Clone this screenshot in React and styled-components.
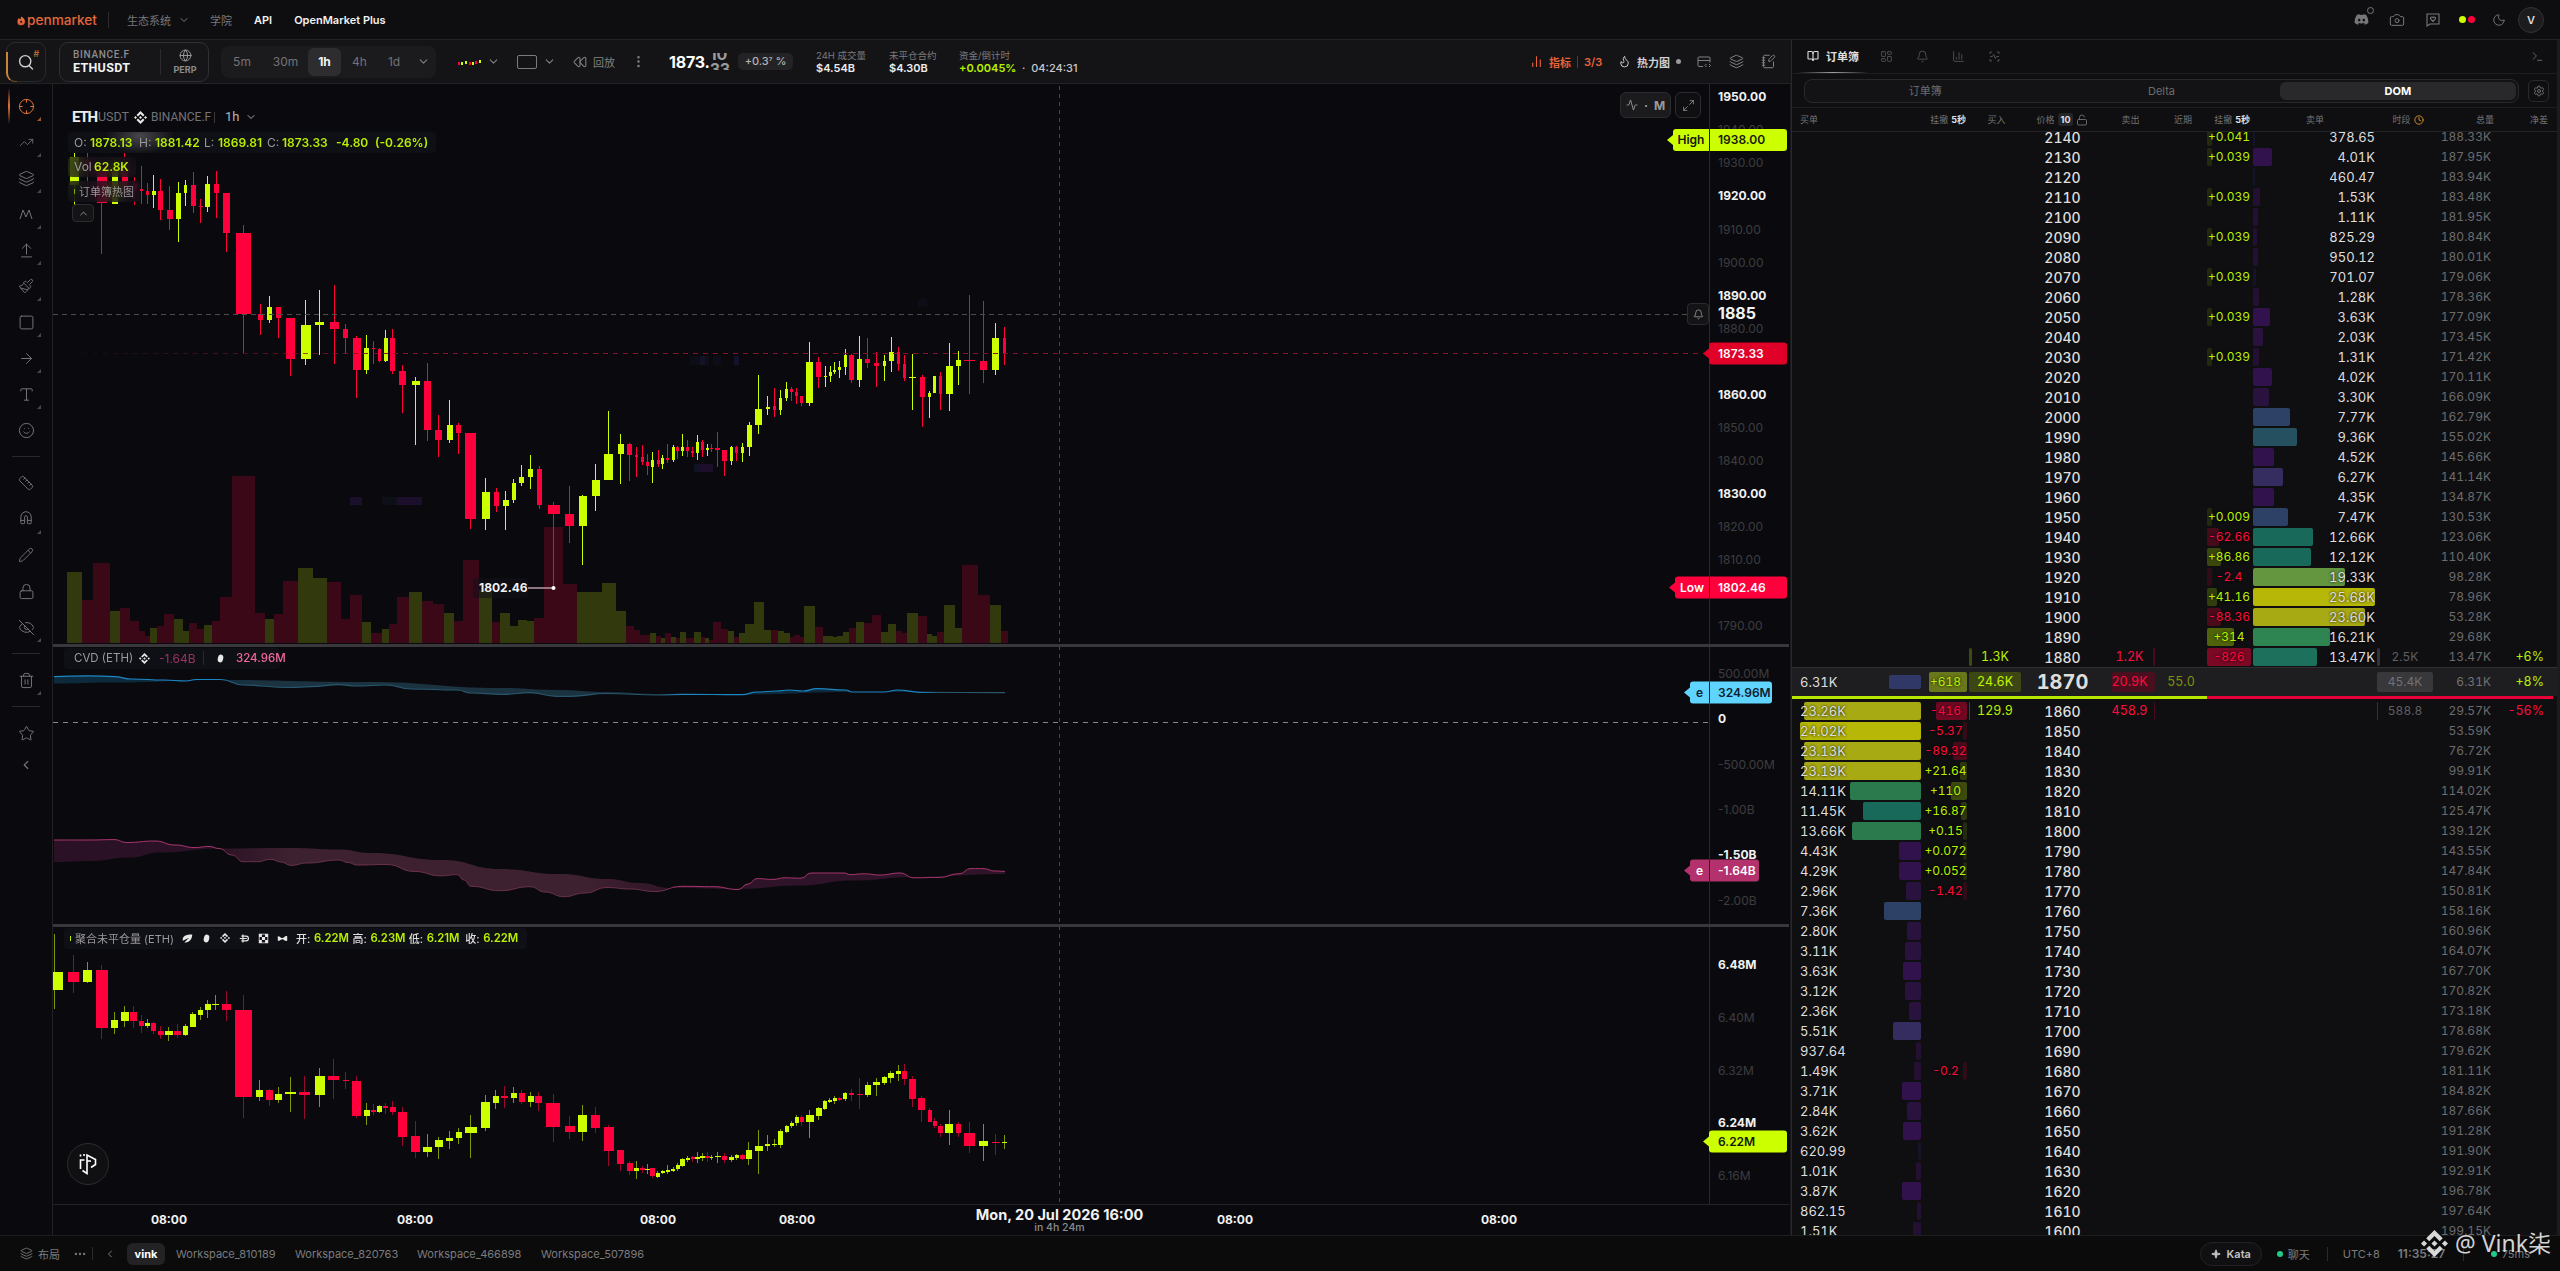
import React from 'react';
import styled, { createGlobalStyle, css } from 'styled-components';
import {
  Activity, ArrowRight, ArrowUpFromLine, Bell, BookOpen, Camera, ChartColumn, ChartNoAxesColumn, ChevronDown,
  ChevronLeft, ChevronUp, Clock, Crosshair, Ellipsis, EllipsisVertical, EyeOff, Flame, Globe, Layers,
  LayoutDashboard, Lock, LockOpen, Magnet, Maximize2, Moon, NotebookPen, Paintbrush, Pencil, Rewind,
  Ruler, Settings, Smile, Sparkle, Square, Star, Terminal, Trash2, TrendingUp, Type,
} from 'lucide-react';
import { FaDiscord } from 'react-icons/fa';
import { SiBinance } from 'react-icons/si';

const lime = '#ccff00';
const red = '#ff003c';
const line = '#222224';
const dim = '#77777a';

const GlobalStyle = createGlobalStyle`
  * { box-sizing: border-box; }
  body {
    margin: 0;
    background: #0a0a0e;
    color: #e6e6e6;
    font-family: Inter, "Noto Sans CJK SC", sans-serif;
    font-size: 12px;
    overflow: hidden;
  }
  svg { display: block; flex: none; }
`;

const Page = styled.div`
  width: 2560px;
  height: 1271px;
  display: grid;
  grid-template-rows: 40px 1195px 36px;
`;

/* ---- top navigation ---- */

const Header = styled.header`
  display: flex;
  align-items: center;
  padding: 0 16px;
  background: #0e0e10;
  border-bottom: 1px solid ${line};
`;
const VLine = styled.i`
  width: 1px;
  height: ${props => props.h || 16}px;
  background: ${props => props.color || '#2b2b2e'};
  margin: 0 ${props => props.gap || 0}px;
  flex: none;
`;
const NavItem = styled.span`
  display: flex;
  align-items: center;
  gap: 7px;
  font-size: 11px;
  font-weight: ${props => (props.strong ? 600 : 400)};
  color: ${props => (props.strong ? '#f2f2f2' : dim)};
  margin-left: ${props => props.ml}px;
  white-space: nowrap;
`;
const HeaderTools = styled.div`
  display: flex;
  align-items: center;
  margin-left: auto;
  color: #77777a;
`;
const HeaderTool = styled.span`
  position: relative;
  display: flex;
  justify-content: center;
  width: ${props => props.w || 35}px;
`;
const Notice = styled.i`
  position: absolute;
  top: -5px;
  right: 5px;
  width: 7px;
  height: 7px;
  border: 1px solid #77777a;
  border-radius: 50%;
`;
const Dot = styled.i`
  width: ${props => props.size || 6}px;
  height: ${props => props.size || 6}px;
  border-radius: 50%;
  background: ${props => props.color};
  flex: none;
`;
const Avatar = styled.span`
  width: 26px;
  height: 26px;
  display: flex;
  align-items: center;
  justify-content: center;
  margin-left: 3px;
  border: 1px solid #333336;
  border-radius: 50%;
  background: #1c1c1e;
  color: #d8d8d8;
  font-size: 11px;
  font-weight: 600;
`;

/* ---- workspace ---- */

const Main = styled.main`
  display: grid;
  grid-template-columns: 1791px 769px;
  min-height: 0;
`;
const Workspace = styled.section`
  display: grid;
  grid-template-rows: 44px 1151px;
`;
const Toolbar = styled.div`
  display: flex;
  align-items: center;
  padding: 0 7px 0 6px;
  background: #141416;
  border-bottom: 1px solid ${line};
  white-space: nowrap;
`;
const SearchButton = styled.div`
  position: relative;
  width: 40px;
  height: 40px;
  display: flex;
  align-items: center;
  justify-content: center;
  border: 1px solid #2a2a2d;
  border-radius: 9px;
  color: #cfcfcf;
  &::before {
    content: '';
    position: absolute;
    left: -1px;
    top: 9px;
    bottom: -1px;
    width: 9px;
    border-left: 2px solid #c9853a;
    border-bottom: 1px solid #7a4c22;
    border-bottom-left-radius: 9px;
  }
`;
const SearchMark = styled.sup`
  position: absolute;
  top: 5px;
  right: 6px;
  color: #b26a35;
  font-size: 9px;
  font-weight: 600;
  font-style: italic;
`;
const SymbolBox = styled.div`
  display: flex;
  align-items: center;
  width: 150px;
  height: 40px;
  margin-left: 13px;
  padding-left: 13px;
  border: 1px solid #303033;
  border-radius: 9px;
  background: #161618;
`;
const Stack = styled.div`
  display: flex;
  flex-direction: column;
  justify-content: center;
  width: ${props => (props.w ? `${props.w}px` : 'auto')};
  margin-left: ${props => props.ml || 0}px;
  align-items: ${props => props.align || 'flex-start'};
  flex: none;
`;
const Venue = styled.span`
  font: 500 10px/12px Roboto, sans-serif;
  letter-spacing: 0.7px;
  color: #8c8c8f;
`;
const Pair = styled.span`
  font: 700 12.5px/13px Roboto, sans-serif;
  letter-spacing: 0.3px;
  color: #f2f2f2;
`;
const Perp = styled.span`
  margin-top: 2px;
  font-size: 9px;
  line-height: 11px;
  font-weight: 700;
  color: #8c8c8f;
`;
const Frames = styled.div`
  display: flex;
  align-items: center;
  height: 32px;
  width: 215px;
  margin-left: 12px;
  border-radius: 8px;
  background: #1b1b1d;
`;
const Frame = styled.span`
  width: ${props => props.w}px;
  height: 28px;
  line-height: 28px;
  text-align: center;
  font-size: 12px;
  border-radius: 6px;
  color: ${props => (props.active ? '#f4f4f4' : '#737376')};
  font-weight: ${props => (props.active ? 700 : 400)};
  background: ${props => (props.active ? '#2d2d30' : 'transparent')};
`;
const ToolSlot = styled.span`
  display: flex;
  align-items: center;
  justify-content: ${props => (props.left ? 'flex-start' : 'center')};
  gap: 6px;
  width: ${props => props.w}px;
  margin-left: ${props => props.ml || 0}px;
  color: ${props => props.color || '#808083'};
  font-size: 11px;
  font-weight: ${props => props.weight || 400};
  flex: none;
`;
const Spacer = styled.i`
  flex: 1;
`;
const Outline = styled.i`
  width: 20px;
  height: 14px;
  border: 1px solid #7b7b7e;
  border-radius: 2px;
`;
const LastPrice = styled.div`
  display: flex;
  align-items: center;
  width: 69px;
  height: 20px;
  margin-left: 24px;
  font-size: 16px;
  font-weight: 700;
  letter-spacing: -0.2px;
  color: #fff;
`;
const RollingDigits = styled.span`
  height: 17px;
  overflow: hidden;
  display: flex;
  flex-direction: column;
  justify-content: center;
  line-height: 15px;
  color: #9b9b9d;
`;
const Badge = styled.div`
  width: 55px;
  height: 17px;
  line-height: 17px;
  border-radius: 5px;
  background: #232326;
  text-align: center;
  font-size: 11px;
  font-weight: 500;
  color: #b4b4b6;
`;
const StatLabel = styled.span`
  font-size: 9.5px;
  line-height: 13px;
  color: #7b7b7e;
`;
const StatValue = styled.span`
  font-size: 11px;
  line-height: 13px;
  font-weight: 600;
  color: ${props => props.color || '#ececec'};
`;
const Countdown = styled.span`
  font-weight: 500;
  color: #c9c9cb;
`;

const ChartRow = styled.div`
  display: grid;
  grid-template-columns: 53px 1738px;
`;
const Rail = styled.nav`
  display: flex;
  flex-direction: column;
  align-items: center;
  padding-top: 4px;
  border-right: 1px solid ${line};
  color: #747477;
`;
const RailButton = styled.div`
  position: relative;
  width: 52px;
  height: ${props => props.h || 36}px;
  display: flex;
  align-items: center;
  justify-content: center;
  color: ${props => (props.active ? '#e07238' : 'inherit')};
  ${props => props.active && css`
    &::before {
      content: '';
      position: absolute;
      left: 8px;
      top: 0;
      width: 2px;
      height: 36px;
      background: linear-gradient(#0a0a0e, #e07238, #0a0a0e);
    }
  `}
  ${props => props.corner && css`
    &::after {
      content: '';
      position: absolute;
      right: 11px;
      bottom: 3px;
      border-left: 4px solid transparent;
      border-bottom: 4px solid ${props.active ? '#a5562d' : '#4a4a4d'};
    }
  `}
`;
const RailRule = styled.hr`
  width: 28px;
  height: 1px;
  margin: 8px 0;
  border: 0;
  background: #29292c;
`;

const ChartArea = styled.div`
  position: relative;
  border-right: 1px solid #1a1a1c;
`;
const AxisText = styled.text`
  font-size: ${props => props.$size || 12}px;
  font-weight: ${props => props.$weight || (props.$bold ? 700 : 400)};
  fill: ${props => props.$fill || (props.$bold ? '#f2f2f2' : '#3d3d40')};
  text-anchor: ${props => props.$anchor || 'start'};
`;
const Legend = styled.div`
  position: absolute;
  left: ${props => props.x}px;
  top: ${props => props.y}px;
  width: ${props => props.w}px;
  height: ${props => props.h || 21}px;
  display: flex;
  align-items: center;
  padding: 0 0 1px 6px;
  border-radius: 4px;
  background-color: rgba(18, 18, 26, 0.72);
  ${props => props.glow && css`
    background-image: radial-gradient(ellipse 34px 18px at 72px 4px, #48484a, transparent);
  `}
  backdrop-filter: blur(6px);
  color: #9a9a9c;
  white-space: nowrap;
`;
const LegendPart = styled.span`
  display: flex;
  align-items: center;
  width: ${props => props.w}px;
  padding-left: ${props => props.pl || 0}px;
  color: ${props => props.color || 'inherit'};
  font-weight: ${props => props.weight || 400};
  font-size: ${props => props.size || 12}px;
  flex: none;
`;
const Tick = styled.i`
  width: 1px;
  height: 5px;
  margin-right: 4px;
  background: ${props => props.color};
`;
const ChartTitle = styled.div`
  position: absolute;
  left: 19px;
  top: 22px;
  display: flex;
  align-items: center;
  height: 22px;
  color: #737376;
  font: 400 13px/22px Roboto, sans-serif;
`;
const Base = styled.b`
  width: 26px;
  color: #ededed;
  font-size: 15px;
  letter-spacing: -1.2px;
`;
const FloatButton = styled.div`
  position: absolute;
  left: ${props => props.x}px;
  top: ${props => props.y}px;
  width: ${props => props.w}px;
  height: ${props => props.h}px;
  display: flex;
  align-items: center;
  justify-content: center;
  gap: 6px;
  border: 1px solid #2c2c2f;
  border-radius: ${props => props.r || 6}px;
  background: ${props => props.bg || '#141416'};
  color: #9a9a9c;
  font-weight: 700;
`;

/* ---- order book panel ---- */

const Panel = styled.aside`
  display: grid;
  grid-template-rows: 34px 34px 24px 1103px;
  border-left: 1px solid #29292b;
  border-right: 3px solid #1c1c1e;
  background: #0f0f11;
  overflow: hidden;
`;
const Tabs = styled.div`
  display: flex;
  align-items: center;
  padding: 0 13px 0 6px;
  border-bottom: 1px solid #1d1d1f;
  color: #4e4e51;
`;
const Tab = styled.span`
  display: flex;
  align-items: center;
  justify-content: center;
  gap: 7px;
  width: ${props => (props.active ? 70 : 36)}px;
  height: 33px;
  font-size: 11px;
  font-weight: 600;
  color: ${props => (props.active ? '#e0e0e0' : 'inherit')};
  ${props => props.active && css`
    border-bottom: 1px solid;
    border-image: linear-gradient(90deg, transparent, #a0a0a0, transparent) 1;
  `}
`;
const Prompt = styled.span`
  margin-left: auto;
  color: #747477;
`;
const ModeRow = styled.div`
  display: flex;
  align-items: center;
  gap: 9px;
  padding: 0 8px 0 12px;
  border-bottom: 1px solid #1d1d1f;
`;
const Modes = styled.div`
  display: grid;
  grid-template-columns: repeat(3, 1fr);
  flex: 1;
  height: 24px;
  padding: 2px;
  border: 1px solid #29292b;
  border-radius: 8px;
  background: #131315;
`;
const Mode = styled.span`
  line-height: 18px;
  text-align: center;
  font-size: 11px;
  border-radius: 6px;
  color: ${props => (props.active ? '#fff' : '#6c6c6f')};
  font-weight: ${props => (props.active ? 700 : 400)};
  background: ${props => (props.active ? '#29292b' : 'transparent')};
`;
const GearButton = styled.span`
  display: flex;
  align-items: center;
  justify-content: center;
  width: 21px;
  height: 22px;
  border: 1px solid #29292b;
  border-radius: 5px;
  color: #77777a;
`;
const columns = '121px 48px 52px 83px 51px 52px 46px 124px 56px 58px 53px';
const HeadRow = styled.div`
  display: grid;
  grid-template-columns: ${columns};
  align-items: center;
  padding-left: 8px;
  border-bottom: 1px solid #232325;
  font-size: 9px;
  color: #737376;
  white-space: nowrap;
`;
const Head = styled.span`
  display: flex;
  align-items: center;
  justify-content: ${props => props.align || 'center'};
  gap: 3px;
  margin-right: ${props => props.mr || 0}px;
  b { color: #e0e0e0; }
`;
const Step = styled.b`
  padding: 0 3px;
  border-radius: 3px;
  background: #252528;
  line-height: 13px;
`;
const Rows = styled.div`
  overflow: hidden;
`;
const AskRows = styled.div`
  margin-top: -5px;
`;
const Row = styled.div`
  display: grid;
  grid-template-columns: ${columns};
  height: ${props => (props.current ? 29 : 20)}px;
  padding-left: 8px;
  background: ${props => (props.current ? '#1e1e20' : 'transparent')};
  border-top: ${props => (props.current ? '1px solid #303033' : '0')};
  font-size: 12.5px;
  font-variant-numeric: tabular-nums;
`;
const Cell = styled.div`
  display: flex;
  align-items: center;
  position: relative;
  min-width: 0;
  margin: 1px ${props => props.mr || 0}px 1px ${props => props.ml || 0}px;
  padding-bottom: 1px;
  justify-content: ${props => props.align || 'center'};
  color: ${props => props.color || '#dededf'};
  font-size: ${props => (props.size ? `${props.size}px` : 'inherit')};
  text-shadow: ${props => (props.shadow ? '0 0 3px #000' : 'none')};
`;
const Price = styled.div`
  display: flex;
  align-items: center;
  justify-content: center;
  font-size: ${props => (props.current ? 20 : 14)}px;
  font-weight: ${props => (props.current ? 700 : 500)};
  color: #dededf;
`;
const Bar = styled.i`
  position: absolute;
  top: ${props => props.inset || 0}px;
  bottom: ${props => props.inset || 0}px;
  ${props => (props.right ? 'right: 0;' : 'left: 0;')}
  border-radius: 2px;
`;
const CellText = styled.span`
  position: relative;
`;
const Imbalance = styled.div`
  height: 3px;
  margin-bottom: 2px;
  margin-right: 4px;
  display: grid;
  grid-template-columns: 415px 1fr;
`;
const ImbalanceSide = styled.i`
  background: ${props => props.color};
`;

/* ---- footer ---- */

const Footer = styled.footer`
  position: relative;
  display: flex;
  align-items: center;
  padding: 0 30px 0 20px;
  border-top: 1px solid #1d1d1f;
  background: #0b0b0c;
  color: #7b7b7e;
  white-space: nowrap;
`;
const FootItem = styled.span`
  display: flex;
  align-items: center;
  gap: 5px;
  width: ${props => (props.w ? `${props.w}px` : 'auto')};
  padding-left: ${props => props.pl || 0}px;
  margin-left: ${props => props.ml || 0}px;
  font-size: ${props => props.size || 11}px;
  font-weight: ${props => props.weight || 400};
  flex: none;
`;
const ActiveSpace = styled.span`
  width: 38px;
  height: 22px;
  margin-right: 11px;
  line-height: 22px;
  text-align: center;
  border-radius: 6px;
  background: #232325;
  color: #fff;
  font-size: 11px;
  font-weight: 700;
`;
const Kata = styled.span`
  display: flex;
  align-items: center;
  justify-content: center;
  gap: 6px;
  width: 62px;
  height: 24px;
  margin-left: auto;
  border: 1px solid #232326;
  border-radius: 12px;
  background: #101012;
  color: #c4c4c6;
  font-size: 11px;
  font-weight: 600;
`;
const Signature = styled.div`
  position: absolute;
  right: 9px;
  top: -9px;
  display: flex;
  align-items: center;
  gap: 7px;
  color: rgba(232, 232, 232, 0.92);
  font: 400 23px/32px "Noto Sans", "Noto Sans CJK SC", sans-serif;
`;

// [center x, body width, body top, body bottom, wick top, wick bottom, rising]
const priceCandles = [
  [74.5, 9, 157, 185, 153, 206, 1], [87.5, 5, 160, 168, 153, 192, 0], [101.5, 10, 167, 203, 160, 254, 0],
  [114.5, 6, 166, 204, 160, 204, 1], [124.5, 6, 166, 190, 153, 196, 0], [134.5, 4, 184, 190, 177, 205, 0],
  [141.5, 3, 189, 191, 166, 204, 0], [147.5, 3, 191, 195, 183, 204, 0], [153.5, 4, 191, 195, 175, 208, 1],
  [160.5, 5, 191, 210, 179, 220, 0], [169.5, 6, 210, 219, 186, 230, 0], [178.5, 5, 193, 219, 182, 242, 1],
  [185.5, 3, 185, 193, 180, 206, 1], [193.5, 5, 185, 206, 172, 213, 0], [200.5, 4, 206, 207, 199, 223, 0],
  [207.5, 5, 184, 207, 176, 212, 1], [216.5, 5, 184, 193, 171, 218, 0], [226.5, 7, 193, 233, 193, 252, 0],
  [243.5, 15, 233, 314, 225, 353, 0], [260.5, 5, 314, 320, 304, 335, 0], [269.5, 5, 307, 320, 296, 323, 1],
  [278.5, 5, 307, 318, 307, 338, 0], [290.5, 9, 318, 359, 318, 376, 0], [305.5, 10, 325, 359, 300, 365, 1],
  [319.5, 9, 322, 325, 290, 355, 1], [334.5, 9, 322, 329, 285, 364, 0], [345.5, 5, 329, 338, 324, 353, 0],
  [356.5, 8, 338, 370, 336, 398, 0], [366.5, 5, 348, 370, 335, 374, 1], [373.5, 3, 348, 349, 341, 364, 0],
  [379.5, 3, 349, 361, 348, 362, 0], [385.5, 4, 338, 361, 330, 362, 1], [392.5, 5, 338, 371, 329, 374, 0],
  [402.5, 7, 371, 385, 365, 413, 0], [415.5, 8, 381, 385, 377, 445, 1], [427.5, 7, 381, 430, 363, 441, 0],
  [438.5, 7, 430, 440, 415, 457, 0], [449.5, 6, 425, 440, 400, 443, 1], [458.5, 5, 425, 433, 423, 454, 0],
  [470.5, 11, 433, 519, 433, 529, 0], [485.5, 8, 492, 519, 478, 530, 1], [496.5, 5, 492, 506, 488, 512, 0],
  [505.5, 6, 500, 506, 491, 530, 1], [513.5, 4, 483, 500, 479, 503, 1], [521.5, 5, 477, 483, 465, 486, 1],
  [530.5, 5, 469, 477, 455, 489, 1], [539.5, 5, 469, 505, 466, 509, 0], [553.5, 12, 505, 514, 502, 588, 0],
  [569.5, 9, 514, 526, 486, 543, 0], [582.5, 8, 496, 526, 495, 565, 1], [595.5, 8, 480, 496, 464, 511, 1],
  [608.5, 9, 454, 480, 411, 480, 1], [620.5, 6, 444, 454, 434, 484, 1], [629.5, 5, 444, 455, 443, 481, 0],
  [636.5, 3, 455, 457, 447, 477, 0], [642.5, 3, 457, 462, 445, 465, 0], [647.5, 3, 462, 466, 454, 475, 0],
  [652.5, 3, 460, 467, 452, 483, 1], [658.5, 3, 460, 464, 450, 467, 0], [662.5, 3, 458, 464, 455, 469, 1],
  [667.5, 3, 458, 460, 444, 463, 0], [673.5, 3, 447, 460, 445, 462, 1], [677.5, 3, 447, 451, 446, 459, 0],
  [682.5, 3, 447, 451, 434, 456, 1], [687.5, 3, 447, 451, 440, 457, 0], [692.5, 3, 451, 453, 447, 457, 0],
  [697.5, 3, 442, 453, 435, 460, 1], [702.5, 3, 442, 450, 440, 457, 0], [707.5, 3, 448, 450, 444, 456, 1],
  [711.5, 3, 448, 449, 444, 452, 0], [717.5, 5, 448, 450, 432, 467, 0], [724.5, 5, 450, 461, 450, 476, 0],
  [731.5, 3, 447, 461, 446, 465, 1], [736.5, 3, 447, 453, 446, 461, 0], [742.5, 3, 447, 453, 443, 462, 1],
  [749.5, 5, 425, 447, 422, 456, 1], [758.5, 7, 409, 425, 375, 434, 1], [767.5, 4, 407, 409, 396, 415, 1],
  [774.5, 3, 406, 410, 388, 417, 0], [780.5, 3, 398, 410, 390, 415, 1], [786.5, 3, 389, 398, 382, 401, 1],
  [791.5, 3, 389, 392, 387, 401, 0], [796.5, 3, 392, 396, 388, 404, 0], [801.5, 3, 396, 403, 396, 406, 0],
  [809.5, 7, 362, 403, 342, 406, 1], [818.5, 5, 362, 377, 357, 388, 0], [825.5, 3, 376, 377, 366, 387, 1],
  [830.5, 3, 372, 376, 366, 382, 1], [834.5, 3, 370, 372, 362, 374, 1], [839.5, 3, 367, 370, 361, 378, 1],
  [845.5, 3, 355, 367, 349, 375, 1], [851.5, 5, 355, 380, 354, 383, 0], [859.5, 5, 359, 380, 336, 387, 1],
  [867.5, 5, 359, 363, 338, 368, 0], [876.5, 5, 363, 366, 352, 387, 0], [884.5, 3, 361, 366, 355, 381, 1],
  [891.5, 5, 352, 361, 337, 372, 1], [898.5, 3, 352, 364, 347, 371, 0], [904.5, 3, 364, 378, 355, 381, 0],
  [912.5, 7, 377, 378, 354, 410, 1], [922.5, 5, 377, 397, 375, 427, 0], [929.5, 3, 393, 397, 391, 418, 1],
  [934.5, 3, 376, 393, 376, 393, 1], [940.5, 3, 376, 394, 372, 410, 0], [949.5, 7, 366, 394, 343, 411, 1],
  [958.5, 5, 360, 366, 351, 385, 1], [969.5, 11, 360, 361, 295, 394, 0], [983.5, 7, 361, 370, 301, 383, 0],
  [995.5, 7, 338, 370, 323, 375, 1], [1004.5, 3, 338, 354, 327, 365, 0],
];

const interestCandles = [
  [54.5, 17, 972, 990, 934, 1009, 1], [73.5, 11, 972, 982, 955, 993, 0], [87.5, 9, 970, 982, 962, 983, 1],
  [101.5, 12, 970, 1028, 965, 1039, 0], [114.5, 7, 1020, 1028, 1012, 1034, 1], [124.5, 8, 1012, 1021, 1006, 1027, 1],
  [133.5, 7, 1012, 1021, 1006, 1028, 0], [141.5, 5, 1021, 1026, 1015, 1033, 0], [147.5, 5, 1023, 1026, 1019, 1028, 1],
  [153, 5, 1023, 1031, 1022, 1034, 0], [160.5, 6, 1031, 1035, 1026, 1039, 0], [168.5, 8, 1031, 1035, 1027, 1041, 1],
  [177.5, 7, 1031, 1035, 1024, 1038, 0], [185.5, 5, 1026, 1035, 1024, 1036, 1], [192.5, 6, 1014, 1027, 1012, 1027, 1],
  [200.5, 5, 1010, 1015, 1007, 1020, 1], [207.5, 6, 1004, 1010, 1000, 1018, 1], [215.5, 7, 1004, 1005, 995, 1010, 1],
  [226, 9, 1004, 1010, 991, 1021, 0], [243.5, 17, 1010, 1097, 995, 1118, 0], [259.5, 7, 1090, 1097, 1080, 1101, 1],
  [269.5, 7, 1090, 1100, 1089, 1106, 0], [278.5, 7, 1094, 1100, 1087, 1103, 1], [290.5, 11, 1092, 1094, 1077, 1112, 1],
  [304.5, 11, 1092, 1095, 1076, 1119, 0], [319.5, 10, 1076, 1095, 1068, 1107, 1], [333.5, 11, 1076, 1080, 1059, 1099, 0],
  [345.5, 6, 1080, 1081, 1072, 1089, 0], [356, 9, 1081, 1116, 1076, 1118, 0], [366.5, 6, 1110, 1116, 1103, 1125, 1],
  [373.5, 5, 1110, 1112, 1104, 1115, 0], [379.5, 5, 1106, 1112, 1105, 1113, 1], [385.5, 5, 1106, 1108, 1103, 1114, 0],
  [392.5, 6, 1107, 1112, 1101, 1115, 0], [402.5, 9, 1112, 1137, 1107, 1146, 0], [415, 9, 1136, 1152, 1121, 1158, 0],
  [427.5, 9, 1147, 1152, 1134, 1157, 1], [438.5, 8, 1140, 1147, 1137, 1159, 1], [449.5, 7, 1138, 1141, 1131, 1149, 1],
  [458.5, 6, 1132, 1138, 1128, 1144, 1], [470.5, 12, 1127, 1133, 1115, 1158, 1], [485, 9, 1102, 1128, 1095, 1131, 1],
  [495.5, 6, 1096, 1103, 1090, 1109, 1], [504.5, 7, 1096, 1098, 1086, 1108, 0], [513.5, 6, 1093, 1098, 1087, 1103, 1],
  [521.5, 6, 1093, 1102, 1090, 1104, 0], [530.5, 6, 1096, 1102, 1092, 1107, 1], [538.5, 7, 1096, 1103, 1092, 1111, 0],
  [553, 14, 1103, 1127, 1094, 1142, 0], [569.5, 10, 1126, 1132, 1116, 1139, 0], [582.5, 9, 1115, 1132, 1105, 1141, 1],
  [595, 9, 1115, 1128, 1107, 1133, 0], [608.5, 10, 1127, 1151, 1125, 1166, 0], [620.5, 7, 1150, 1164, 1150, 1171, 0],
  [629.5, 6, 1163, 1171, 1161, 1175, 0], [636.5, 5, 1168, 1171, 1161, 1179, 1], [642.5, 5, 1168, 1170, 1166, 1173, 0],
  [647.5, 5, 1169, 1170, 1164, 1174, 1], [652.5, 5, 1168, 1176, 1168, 1178, 0], [657.5, 4, 1173, 1177, 1171, 1178, 1],
  [662.5, 4, 1171, 1173, 1170, 1174, 1], [667.5, 4, 1170, 1172, 1165, 1174, 1], [673, 4, 1169, 1171, 1167, 1172, 1],
  [677.5, 4, 1165, 1169, 1163, 1171, 1], [682.5, 5, 1159, 1166, 1158, 1167, 1], [687.5, 4, 1158, 1160, 1156, 1162, 1],
  [692.5, 4, 1157, 1159, 1156, 1162, 0], [697.5, 5, 1157, 1159, 1152, 1163, 1], [702.5, 5, 1156, 1158, 1153, 1161, 1],
  [707.5, 5, 1156, 1158, 1152, 1162, 0], [711.5, 3, 1157, 1158, 1155, 1160, 1], [717.5, 6, 1156, 1157, 1152, 1163, 1],
  [724.5, 5, 1156, 1160, 1153, 1163, 0], [731.5, 5, 1157, 1160, 1155, 1162, 1], [736.5, 4, 1155, 1158, 1154, 1160, 1],
  [742, 5, 1155, 1159, 1154, 1160, 0], [748.5, 6, 1150, 1159, 1142, 1165, 1], [758.5, 8, 1146, 1151, 1130, 1174, 1],
  [767.5, 5, 1144, 1146, 1135, 1151, 1], [774.5, 5, 1144, 1145, 1139, 1147, 1], [780.5, 5, 1131, 1145, 1129, 1148, 1],
  [786.5, 4, 1126, 1132, 1125, 1133, 1], [791.5, 4, 1123, 1126, 1121, 1128, 1], [796.5, 4, 1117, 1123, 1115, 1126, 1],
  [801.5, 4, 1117, 1122, 1115, 1126, 0], [809.5, 8, 1115, 1122, 1110, 1138, 1], [818.5, 6, 1108, 1116, 1107, 1120, 1],
  [824.5, 4, 1101, 1109, 1100, 1110, 1], [829.5, 4, 1100, 1102, 1098, 1103, 1], [834.5, 4, 1098, 1101, 1096, 1104, 1],
  [839.5, 4, 1098, 1100, 1097, 1101, 0], [845, 4, 1093, 1099, 1092, 1101, 1], [851.5, 5, 1093, 1095, 1089, 1101, 0],
  [859.5, 6, 1094, 1095, 1078, 1109, 0], [867.5, 6, 1085, 1095, 1082, 1097, 1], [876.5, 7, 1082, 1085, 1078, 1096, 1],
  [884, 5, 1077, 1083, 1076, 1085, 1], [890.5, 6, 1073, 1078, 1071, 1083, 1], [898.5, 5, 1071, 1074, 1065, 1081, 1],
  [904.5, 5, 1071, 1079, 1064, 1085, 0], [912, 7, 1079, 1099, 1076, 1107, 0], [921.5, 7, 1098, 1110, 1096, 1122, 0],
  [929.5, 4, 1110, 1122, 1108, 1122, 0], [934.5, 4, 1121, 1126, 1118, 1128, 0], [940.5, 5, 1126, 1133, 1124, 1137, 0],
  [949, 8, 1124, 1133, 1110, 1145, 1], [958, 5, 1124, 1133, 1122, 1137, 0], [969.5, 11, 1133, 1146, 1122, 1153, 0],
  [983.5, 9, 1141, 1146, 1124, 1161, 1], [995.5, 8, 1142, 1143, 1134, 1155, 0], [1004.5, 5, 1142, 1143, 1135, 1149, 1],
];

// [right edge, top, rising]; every bar starts where the last one ends
const volumes = [
  [82, 572, 1], [93, 600, 0], [109.5, 563, 0], [119.5, 611, 1], [130, 608, 0], [138.5, 621, 0], [144.5, 631, 0],
  [150, 636, 0], [157, 628, 1], [164, 626, 0], [174, 614, 0], [182.5, 619, 1], [189, 631, 1], [197, 623, 0],
  [204, 629, 0], [212, 625, 1], [220, 621, 0], [232, 597, 0], [255, 476, 0], [265, 613, 0], [274, 619, 1],
  [283, 614, 0], [298, 581, 0], [312.5, 568, 1], [327, 578, 1], [341, 582, 0], [350, 619, 0], [362, 595, 0],
  [370.5, 622, 1], [382, 633, 0], [389, 629, 1], [397, 624, 0], [409, 597, 0], [422, 592, 1], [433, 601, 0],
  [444, 604, 0], [454, 613, 1], [462.5, 621, 0], [479, 560, 0], [492, 590, 1], [500, 622, 0], [510, 613, 1],
  [517.5, 626, 1], [527, 620, 1], [534, 621, 1], [543.5, 618, 0], [563, 527, 0], [576.5, 584, 0], [602, 592, 1],
  [615.5, 583, 1], [625.5, 611, 1], [634, 626, 0], [640, 630, 0], [649.5, 635, 0], [656, 633, 1], [661, 636, 0],
  [665, 638, 1], [670.5, 633, 0], [675.5, 637, 1], [679.5, 638, 0], [686, 632, 1], [694, 638, 0], [700.5, 632, 1],
  [705, 637, 0], [709, 638, 1], [713, 640, 0], [721, 622, 0], [728, 629, 0], [734, 631, 1], [739, 637, 0],
  [745, 633, 1], [753.5, 624, 1], [764, 602, 1], [771, 630, 1], [778, 630, 0], [783.5, 631, 1], [790, 633, 1],
  [794, 637, 0], [799.5, 635, 0], [804, 637, 0], [815, 606, 1], [823, 627, 0], [832.5, 636, 1], [837, 637, 1],
  [842.5, 636, 1], [848.5, 632, 1], [856, 628, 0], [864, 622, 1], [872, 623, 0], [881, 615, 0], [887.5, 632, 1],
  [895.5, 624, 1], [902, 631, 0], [907, 633, 0], [917.5, 613, 1], [926.5, 616, 0], [932, 634, 1], [937, 636, 1],
  [943.5, 632, 0], [955, 605, 1], [961.5, 628, 1], [978, 565, 0], [990, 595, 0], [1001, 605, 1], [1007.5, 631, 0],
];

const heatCells = [
  [350, 497, 12, 8, '#1b0f2b'], [382, 497, 15, 8, '#0d0f19'], [397, 497, 25, 8, '#1b0f2b'],
  [694, 464, 6, 8, '#101322'], [700, 464, 13, 8, '#1b0f2b'], [690, 356, 10, 9, '#0c0d16'],
  [700, 356, 5, 9, '#131226'], [705, 356, 4, 9, '#0e0e18'], [713, 356, 8, 9, '#0d0d17'],
  [734, 356, 5, 9, '#12132a'], [918, 299, 9, 8, '#0d0e15'],
];

const cvdPerp = [
  [54, 840], [89, 840], [114, 839.6], [127, 842.5], [155, 841], [175, 845], [195, 847.6], [209, 846.4], [219, 848.5],
  [232, 855], [243, 861.7], [257, 861.7], [271, 859.3], [281, 862], [291, 865.4], [307, 863], [339, 860], [348, 862.5],
  [357, 865], [387, 864.5], [414, 871.4], [441, 875.8], [457, 874.6], [464, 880], [471, 886.3], [500, 890.7],
  [530, 886.7], [545, 892], [564, 896.7], [585, 893], [607, 887.5], [630, 889], [655, 891.5], [682, 886.3], [714, 886.7],
  [738, 889.5], [748, 884], [757, 878.6], [773, 879.4], [785, 877.8], [801, 878.2], [811, 873], [844, 873], [850, 874.6],
  [864, 873.8], [880, 875], [900, 873], [914, 877.8], [939, 877.4], [959, 873.8], [971, 868.6], [983, 868.6], [995, 871],
  [1005, 871.4],
];
const cvdPerpMean = [
  [54, 862], [89, 861], [130, 857.5], [159, 852.5], [219, 848.5], [290, 848], [339, 849.5], [371, 853], [442, 860],
  [500, 869], [560, 874], [607, 879], [640, 883], [670, 888], [738, 889], [800, 885.5], [852, 880.5], [914, 877], [1005, 874],
];
const cvdSpot = [
  [54, 676.6], [89, 675.8], [114, 676.6], [132, 679], [164, 680], [186, 681], [196, 679.5], [221, 679.5], [243, 685],
  [289, 687.5], [311, 686.7], [339, 684.7], [357, 686], [386, 685], [411, 689], [457, 690], [471, 693], [503, 694.3],
  [530, 692.7], [557, 696.3], [570, 696.3], [607, 693.5], [659, 695], [682, 694.3], [742, 694.7], [757, 692], [777, 691],
  [789, 690], [803, 691], [817, 688.7], [846, 690], [852, 692], [884, 692], [898, 690], [920, 692.3], [1005, 692.7],
];
const cvdSpotMean = [
  [54, 683.5], [110, 682.5], [221, 680], [370, 682], [500, 688], [557, 690], [607, 692], [660, 694], [742, 694.5],
  [852, 692], [920, 692], [1005, 692],
];

const axisLabels = [
  ['1950.00', 96, 1], ['1940.00', 129], ['1930.00', 162], ['1920.00', 195, 1], ['1910.00', 229], ['1900.00', 262],
  ['1890.00', 295, 1], ['1880.00', 328], ['1860.00', 394, 1], ['1850.00', 427], ['1840.00', 460], ['1830.00', 493, 1],
  ['1820.00', 526], ['1810.00', 559], ['1790.00', 625], ['500.00M', 673], ['0', 718, 1], ['-500.00M', 764],
  ['-1.00B', 809], ['-1.50B', 854, 1], ['-2.00B', 900], ['6.48M', 964, 1], ['6.40M', 1017], ['6.32M', 1070],
  ['6.24M', 1122, 1], ['6.16M', 1175],
];

// [label, value, center y, fill, text colour, left x, right x]
const axisTags = [
  ['High', '1938.00', 140, lime, '#15180a', 1673, 1787],
  ['', '1873.33', 353.5, '#e00028', '#fff', 1709, 1787],
  ['Low', '1802.46', 587.5, red, '#fff', 1675, 1787],
  ['e', '324.96M', 692.5, '#5fd4ff', '#0b2230', 1690, 1772],
  ['e', '-1.64B', 870.5, '#b3316d', '#fff', 1690, 1759],
  ['', '6.22M', 1141.5, lime, '#15180a', 1709, 1787],
];

function smooth(points) {
  let d = `M${points[0][0]} ${points[0][1]}`;
  for (let i = 1; i < points.length; i += 1) {
    const [x0, y0] = points[i - 1];
    const [x1, y1] = points[i];
    const mid = (x0 + x1) / 2;
    d += `C${mid} ${y0} ${mid} ${y1} ${x1} ${y1}`;
  }
  return d;
}

const area = (a, b) => `${smooth(a)}L${smooth([...b].reverse()).slice(1)}Z`;

function Candles({ data, faded }) {
  return data.map(([x, w, top, bottom, high, low, up]) => {
    const color = up ? lime : red;
    const wick = up ? '#7c9a08' : '#96082c';
    const left = Math.round(x - w / 2);
    return (
      <g key={x}>
        <rect x={Math.floor(x)} y={high} width="1" height={low - high} fill={faded ? wick : color} />
        <rect x={left} y={top} width={w} height={bottom - top} fill={color} />
      </g>
    );
  });
}

function Tag({ tag }) {
  const [label, value, y, fill, color, x0, x1] = tag;
  return (
    <g>
      <path d={`M${x0 - 6} ${y}L${x0} ${y - 5}V${y + 5}Z`} fill={fill} />
      <rect x={x0} y={y - 11} width={x1 - x0} height="22" rx="3" fill={fill} />
      {label && <rect x="1709" y={y - 11} width="1" height="22" fill="#1d1d1f" />}
      {label && <AxisText x={(x0 + 1709) / 2} y={y + 4} $anchor="middle" $fill={color} $weight={600}>{label}</AxisText>}
      <AxisText x="1718" y={y + 4} $fill={color} $weight={600}>{value}</AxisText>
    </g>
  );
}

function Chart() {
  const times = [169, 415, 658, 797, 1235, 1499];
  return (
    <svg width="1737" height="1151" viewBox="53 84 1737 1151">
      <defs>
        <linearGradient id="spotFill" gradientUnits="userSpaceOnUse" x1="54" x2="1005" y1="0" y2="0">
          <stop offset="0.17" stopColor="#0d2a3d" /><stop offset="0.21" stopColor="#1b3240" />
          <stop offset="0.56" stopColor="#1b3240" /><stop offset="0.62" stopColor="#0d2a3d" />
        </linearGradient>
        <linearGradient id="spotLine" gradientUnits="userSpaceOnUse" x1="54" x2="1005" y1="0" y2="0">
          <stop offset="0.17" stopColor="#1b86c4" /><stop offset="0.19" stopColor="#29566d" />
          <stop offset="0.64" stopColor="#29566d" /><stop offset="0.66" stopColor="#1b86c4" />
          <stop offset="0.91" stopColor="#1b86c4" /><stop offset="0.93" stopColor="#29566d" />
        </linearGradient>
        <linearGradient id="perpFill" gradientUnits="userSpaceOnUse" x1="54" x2="1005" y1="0" y2="0">
          <stop offset="0.17" stopColor="#2b1125" /><stop offset="0.25" stopColor="#3d2130" />
          <stop offset="0.56" stopColor="#3d2130" /><stop offset="0.66" stopColor="#2f1328" />
        </linearGradient>
        <linearGradient id="perpLine" gradientUnits="userSpaceOnUse" x1="54" x2="1005" y1="0" y2="0">
          <stop offset="0.17" stopColor="#a8346d" /><stop offset="0.19" stopColor="#6a3049" />
          <stop offset="0.64" stopColor="#6a3049" /><stop offset="0.66" stopColor="#a8346d" />
        </linearGradient>
        <linearGradient id="lastLine" gradientUnits="userSpaceOnUse" x1="53" x2="400" y1="0" y2="0">
          <stop offset="0" stopColor="#8a1029" stopOpacity="0" /><stop offset="1" stopColor="#8a1029" />
        </linearGradient>
      </defs>

      <g shapeRendering="crispEdges">
        {volumes.map(([right, top, up], i) => {
          const left = i ? volumes[i - 1][0] : 67;
          return <rect key={right} x={left} y={top} width={right - left} height={643 - top} fill={up ? '#31390d' : '#3a0817'} />;
        })}
        {heatCells.map(([x, y, w, h, fill]) => <rect key={`${x}-${y}`} x={x} y={y} width={w} height={h} fill={fill} />)}
        <Candles data={priceCandles} />
        <Candles data={interestCandles} faded />
      </g>

      <path d={area(cvdSpot, cvdSpotMean)} fill="url(#spotFill)" />
      <path d={smooth(cvdSpot)} fill="none" stroke="url(#spotLine)" strokeWidth="1.2" />
      <path d={area(cvdPerp, cvdPerpMean)} fill="url(#perpFill)" />
      <path d={smooth(cvdPerp)} fill="none" stroke="url(#perpLine)" />

      <rect x="473" y="578" width="55" height="20" rx="3" fill="#101018" fillOpacity="0.55" />
      <AxisText x="479" y="592" $bold>1802.46</AxisText>
      <path d="M528 588H553" stroke="#b89aa3" strokeWidth="1.5" />
      <circle cx="553.5" cy="588" r="2" fill="#fff" />

      <g shapeRendering="crispEdges" fill="none">
        <path d="M53 314.5H1687" stroke="#4c4c50" strokeDasharray="5 4" />
        <path d="M53 353.5L1704 353.6" stroke="url(#lastLine)" strokeDasharray="5 5" />
        <path d="M53 722.5H1708" stroke="#86868a" strokeDasharray="5 5" />
        <path d="M1059.5 86V1204" stroke="#48484b" strokeDasharray="4 4" />
        <path d="M53 1204.5H1789" stroke="#242427" />
        <path d="M1709.5 84V1204" stroke="#29292c" />
        <path d="M53 645.5H1789M53 925.5H1789" stroke="#38383c" strokeWidth="3" />
      </g>

      {axisLabels.map(([text, y, bold]) => (
        <AxisText key={text} x="1718" y={y + 4.5} $bold={bold}>{text}</AxisText>
      ))}
      <AxisText x="1718" y="319" $bold $size={16}>1885</AxisText>
      {axisTags.map(tag => <Tag key={tag[1]} tag={tag} />)}

      {times.map(x => <AxisText key={x} x={x} y="1223.5" $bold $anchor="middle">08:00</AxisText>)}
      <AxisText x="1059.5" y="1220" $bold $size={14.5} $anchor="middle">Mon, 20 Jul 2026 16:00</AxisText>
      <AxisText x="1059.5" y="1231" $size={10.5} $fill="#8c8c8f" $weight={500} $anchor="middle">in 4h 24m</AxisText>
    </svg>
  );
}

/* exchange marks that sit in the legends */
const marks = {
  leaf: <path d="M1 10C0 4 5 2 13 2C13 8 9 13 3 12L9 6L1 10Z" fill="#e8e8e8" />,
  pill: <ellipse cx="7" cy="7" rx="3.4" ry="5" fill="#e8e8e8" transform="rotate(15 7 7)" />,
  bybit: <path d="M3 4H9A3 3 0 0 1 9 10H3M5 2V12M1 7H10" fill="none" stroke="#e8e8e8" strokeWidth="1.5" />,
  okx: <path d="M1 1H13V13H1ZM5 2V5H2V9H5V12H9V9H12V5H9V2ZM5 5H9V9H5Z" fill="#e8e8e8" fillRule="evenodd" />,
  bow: <path d="M1 4C4 4 5 6.5 7 6.5S10 3 13 4V10C10 11 9 7.8 7 7.8S4 10 1 10Z" fill="#e8e8e8" />,
};
const Mark = ({ name, size = 11 }) => <svg width={size} height={size} viewBox="0 0 14 14">{marks[name]}</svg>;

const Logo = () => (
  <svg width="82" height="20" viewBox="0 0 82 20">
    <defs>
      <linearGradient id="logoFill" x1="0" x2="0" y1="0" y2="1">
        <stop offset="0" stopColor="#f07a35" /><stop offset="1" stopColor="#d9563f" />
      </linearGradient>
    </defs>
    <path d="M1.4 11.4C1.4 10 2.4 9 2.6 8C3.4 8.3 3.8 9 4 9.4C4.8 8.6 5.2 7.8 5 6.4C7.2 7.4 9 9.2 9 11.6A3.8 3.8 0 0 1 1.4 11.4Z" fill="url(#logoFill)" />
    <circle cx="5.2" cy="11.8" r="1" fill="#0e0e10" />
    <text x="11" y="15" textLength="70" lengthAdjust="spacingAndGlyphs" fill="url(#logoFill)" fontSize="13.5" fontWeight="500">penmarket</text>
  </svg>
);

const MiniCandles = () => (
  <svg width="23" height="10" viewBox="0 0 23 10">
    {[[0, 5, red], [3, 5, lime], [7, 4, lime], [11, 5, red], [14, 5, lime], [17, 4, red], [21, 3, lime]].map(([x, y, fill]) => (
      <rect key={x} x={x} y={y} width="2" height="3" fill={fill} />
    ))}
  </svg>
);

const SearchIcon = () => (
  <svg width="16" height="16" viewBox="0 0 16 16" fill="none" stroke="currentColor" strokeWidth="1.4" strokeLinecap="round">
    <circle cx="7.2" cy="7.2" r="5.6" /><path d="M11 11.5L14.5 15" />
  </svg>
);
const Pattern = () => (
  <svg width="14" height="14" viewBox="0 0 14 14" fill="none" stroke="currentColor">
    <path d="M1 12L4 3L7 10L10 3L13 12" />
  </svg>
);
const CodeWindow = () => (
  <svg width="14" height="14" viewBox="0 0 14 14" fill="none" stroke="currentColor">
    <path d="M6 11.5H2A1 1 0 0 1 1 10.5V3A1 1 0 0 1 2 2H12A1 1 0 0 1 13 3V7.5M1 5.5H13M9.5 9L8 10.5L9.5 12M12 9L13.5 10.5L12 12" />
  </svg>
);
const ScanPulse = () => (
  <svg width="11" height="11" viewBox="0 0 11 11" fill="none" stroke="currentColor">
    <path d="M1 3V1H3M8 1H10V3M10 8V10H8M3 10H1V8M1 5.5H3.5L4.7 3.5L6.3 7.5L7.5 5.5H10" />
  </svg>
);

const icon = { size: 17, strokeWidth: 1.4 };
const railGroups = [
  [[<Crosshair {...icon} />, 1], [<TrendingUp {...icon} size={15} />, 1], [<Layers {...icon} />, 1], [<Pattern />, 1],
    [<ArrowUpFromLine {...icon} />, 1], [<Paintbrush {...icon} size={16} />, 1], [<Square {...icon} />, 1],
    [<ArrowRight {...icon} />, 1], [<Type {...icon} />, 1], [<Smile {...icon} />, 0]],
  [[<Ruler {...icon} size={16} />, 0], [<Magnet {...icon} size={16} style={{ transform: 'rotate(-45deg)' }} />, 1],
    [<Pencil {...icon} size={16} />, 0], [<Lock {...icon} />, 0], [<EyeOff {...icon} />, 1]],
  [[<Trash2 {...icon} />, 1]],
];

function bookColor(k) {
  const steps = [
    [0.5, '#12142a'], [0.8, '#181228'], [2, '#241033'], [3.4, '#2a123f'], [5, '#32124c'], [7, '#352c60'], [8, '#2d4066'],
    [10, '#24505f'], [13, '#19695a'], [13.6, '#1d705c'], [15, '#2b7a4e'], [17, '#2f8552'], [20, '#63963f'], [24, '#a8aa14'],
  ];
  const hit = steps.find(([limit]) => k < limit);
  return hit ? hit[1] : '#b6b707';
}
const inK = text => (text.endsWith('K') ? parseFloat(text) : parseFloat(text) / 1000);

// [price, pulled, size, total]
const asks = [
  [2140, '+0.041', '378.65', '188.33K'], [2130, '+0.039', '4.01K', '187.95K'], [2120, '', '460.47', '183.94K'],
  [2110, '+0.039', '1.53K', '183.48K'], [2100, '', '1.11K', '181.95K'], [2090, '+0.039', '825.29', '180.84K'],
  [2080, '', '950.12', '180.01K'], [2070, '+0.039', '701.07', '179.06K'], [2060, '', '1.28K', '178.36K'],
  [2050, '+0.039', '3.63K', '177.09K'], [2040, '', '2.03K', '173.45K'], [2030, '+0.039', '1.31K', '171.42K'],
  [2020, '', '4.02K', '170.11K'], [2010, '', '3.30K', '166.09K'], [2000, '', '7.77K', '162.79K'],
  [1990, '', '9.36K', '155.02K'], [1980, '', '4.52K', '145.66K'], [1970, '', '6.27K', '141.14K'],
  [1960, '', '4.35K', '134.87K'], [1950, '+0.009', '7.47K', '130.53K'], [1940, '-62.66', '12.66K', '123.06K'],
  [1930, '+86.86', '12.12K', '110.40K'], [1920, '-2.4', '19.33K', '98.28K'], [1910, '+41.16', '25.68K', '78.96K'],
  [1900, '-88.36', '23.60K', '53.28K'], [1890, '+314', '16.21K', '29.68K'],
  [1880, '-826', '13.47K', '13.47K', { buy: '1.3K', sell: '1.2K', session: '2.5K', net: '+6%', w: 3 }],
];
const bids = [
  [1860, '-416', '23.26K', '29.57K', { buy: '129.9', sell: '458.9', session: '588.8', net: '-56%', w: 1 }],
  [1850, '-5.37', '24.02K', '53.59K'], [1840, '-89.32', '23.13K', '76.72K'], [1830, '+21.64', '23.19K', '99.91K'],
  [1820, '+110', '14.11K', '114.02K'], [1810, '+16.87', '11.45K', '125.47K'], [1800, '+0.15', '13.66K', '139.12K'],
  [1790, '+0.072', '4.43K', '143.55K'], [1780, '+0.052', '4.29K', '147.84K'], [1770, '-1.42', '2.96K', '150.81K'],
  [1760, '', '7.36K', '158.16K'], [1750, '', '2.80K', '160.96K'], [1740, '', '3.11K', '164.07K'],
  [1730, '', '3.63K', '167.70K'], [1720, '', '3.12K', '170.82K'], [1710, '', '2.36K', '173.18K'],
  [1700, '', '5.51K', '178.68K'], [1690, '', '937.64', '179.62K'], [1680, '-0.2', '1.49K', '181.11K'],
  [1670, '', '3.71K', '184.82K'], [1660, '', '2.84K', '187.66K'], [1650, '', '3.62K', '191.28K'],
  [1640, '', '620.99', '191.90K'], [1630, '', '1.01K', '192.91K'], [1620, '', '3.87K', '196.78K'],
  [1610, '', '862.15', '197.64K'], [1600, '', '1.51K', '199.15K'],
];

const sign = text => (text.startsWith('-') ? '#ff0a3c' : '#b9f000');

function Pulled({ value, side }) {
  if (!value) return <Cell />;
  const amount = Math.abs(parseFloat(value));
  const width = side === 'bid' ? Math.max(4, 38 * Math.sqrt(amount / 618)) : Math.max(5, 44 * Math.sqrt(amount / 826));
  const alpha = Math.min(0.45, 0.12 + Math.sqrt(amount) / 70);
  const rgb = value.startsWith('-') ? '255, 0, 60' : '190, 240, 0';
  return (
    <Cell color={sign(value)} ml={side === 'bid' ? 3 : 0} mr={2} size={12} shadow>
      <Bar right={side === 'bid'} style={{ width, background: `rgba(${rgb}, ${alpha})` }} />
      <CellText>{value}</CellText>
    </Cell>
  );
}

function BookRow({ row, side }) {
  const [price, pulled, size, total, trades] = row;
  const k = inK(size);
  const bar = { width: (k / (side === 'bid' ? 24.02 : 25.68)) * (side === 'bid' ? 121 : 122), background: bookColor(k) };
  return (
    <Row>
      {side === 'bid'
        ? <Cell align="flex-start" size={13} shadow={k > 10}><Bar right style={bar} /><CellText>{size}</CellText></Cell>
        : <Cell />}
      {side === 'bid' ? <Pulled value={pulled} side="bid" /> : <Cell />}
      <Cell color="#b9f000">
        {trades && <Bar style={{ width: trades.w, background: '#3d4a12' }} />}
        {trades && trades.buy}
      </Cell>
      <Price>{price}</Price>
      <Cell color="#ff0a3c">
        {trades && <Bar right style={{ width: trades.w - 1 || 1, background: '#4a0a1c' }} />}
        {trades && trades.sell}
      </Cell>
      <Cell />
      {side === 'ask' ? <Pulled value={pulled} side="ask" /> : <Cell />}
      {side === 'ask'
        ? <Cell align="flex-end" size={13} mr={2} shadow={k > 10}><Bar style={bar} /><CellText>{size}</CellText></Cell>
        : <Cell />}
      <Cell color="#5f5f62" size={12}>
        {trades && <Bar style={{ width: trades.w, background: '#333336' }} />}
        {trades && trades.session}
      </Cell>
      <Cell align="flex-end" color="#6b6b6e" size={12}>{total}</Cell>
      <Cell align="flex-end" color={trades && sign(trades.net)}>{trades && trades.net}</Cell>
    </Row>
  );
}

function OrderBook() {
  return (
    <Panel>
      <Tabs>
        <Tab active><BookOpen size={12} strokeWidth={2.2} />订单簿</Tab>
        <Tab><LayoutDashboard size={13} strokeWidth={1.8} /></Tab>
        <Tab><Bell size={13} strokeWidth={1.8} /></Tab>
        <Tab><ChartColumn size={13} strokeWidth={1.8} /></Tab>
        <Tab><ScanPulse /></Tab>
        <Prompt><Terminal size={13} strokeWidth={1.6} /></Prompt>
      </Tabs>
      <ModeRow>
        <Modes><Mode>订单簿</Mode><Mode>Delta</Mode><Mode active>DOM</Mode></Modes>
        <GearButton><Settings size={12} strokeWidth={1.8} /></GearButton>
      </ModeRow>
      <HeadRow>
        <Head align="flex-start">买单</Head>
        <Head align="flex-end" mr={3}>挂撤 <b>5秒</b></Head>
        <Head mr={-3}>买入</Head>
        <Head>价格 <Step>10</Step> <LockOpen size={12} strokeWidth={1.8} /></Head>
        <Head mr={-2}>卖出</Head>
        <Head mr={-4}>近期</Head>
        <Head align="flex-end" mr={3}>挂撤 <b>5秒</b></Head>
        <Head>卖单</Head>
        <Head mr={-6}>时段 <Clock size={10} strokeWidth={2.4} color="#c98a2c" /></Head>
        <Head align="flex-end" mr={-3}>总量</Head>
        <Head align="flex-end" mr={-4}>净差</Head>
      </HeadRow>
      <Rows>
        <AskRows>{asks.map(row => <BookRow key={row[0]} row={row} side="ask" />)}</AskRows>
        <Row current>
          <Cell align="flex-start" size={13}><Bar right inset={6} style={{ width: 32, background: '#2f3866' }} /><CellText>6.31K</CellText></Cell>
          <Cell ml={3} mr={2} size={12} color="#b9f000" shadow><Bar right inset={3} style={{ width: 38, background: '#69781a' }} /><CellText>+618</CellText></Cell>
          <Cell color="#c4f500"><Bar inset={3} style={{ width: 52, background: '#3c4714' }} /><CellText>24.6K</CellText></Cell>
          <Price current>1870</Price>
          <Cell color="#ff0a3c"><Bar right inset={3} style={{ width: 43, background: '#4a0f1e' }} /><CellText>20.9K</CellText></Cell>
          <Cell color="#7d920f">55.0</Cell>
          <Cell />
          <Cell />
          <Cell color="#727275" size={12}><Bar inset={3} style={{ width: 56, background: '#38383b' }} /><CellText>45.4K</CellText></Cell>
          <Cell align="flex-end" color="#727275" size={12}>6.31K</Cell>
          <Cell align="flex-end" color="#b9f000">+8%</Cell>
        </Row>
        <Imbalance><ImbalanceSide color="#b9e800" /><ImbalanceSide color="#e8003a" /></Imbalance>
        {bids.map(row => <BookRow key={row[0]} row={row} side="bid" />)}
      </Rows>
    </Panel>
  );
}

function TopToolbar() {
  return (
    <Toolbar>
      <SearchButton><SearchIcon /><SearchMark>#</SearchMark></SearchButton>
      <SymbolBox>
        <Stack w={87}><Venue>BINANCE.F</Venue><Pair>ETHUSDT</Pair></Stack>
        <VLine h={26} />
        <Stack w={48} align="center"><Globe size={13} strokeWidth={1.8} color="#9a9a9c" /><Perp>PERP</Perp></Stack>
      </SymbolBox>
      <Frames>
        <Frame w={42}>5m</Frame><Frame w={45}>30m</Frame><Frame w={33} active>1h</Frame>
        <Frame w={37}>4h</Frame><Frame w={32}>1d</Frame>
        <ToolSlot w={26}><ChevronDown size={13} /></ToolSlot>
      </Frames>
      <ToolSlot w={44} left ml={22}><MiniCandles /><ChevronDown size={13} /></ToolSlot>
      <ToolSlot w={56} left ml={15}><Outline /><ChevronDown size={13} /></ToolSlot>
      <ToolSlot w={58} left><Rewind size={14} strokeWidth={1.8} />回放</ToolSlot>
      <ToolSlot w={14}><EllipsisVertical size={15} /></ToolSlot>
      <LastPrice>1873.<RollingDigits><span>10</span><span>33</span></RollingDigits></LastPrice>
      <Badge>+0.3<small>⁷</small> %</Badge>
      <Stack w={73} ml={23}><StatLabel>24H 成交量</StatLabel><StatValue>$4.54B</StatValue></Stack>
      <Stack w={70}><StatLabel>未平仓合约</StatLabel><StatValue>$4.30B</StatValue></Stack>
      <Stack>
        <StatLabel>资金/倒计时</StatLabel>
        <StatValue color="#b9f000">+0.0045% <Countdown>&nbsp;·&nbsp; 04:24:31</Countdown></StatValue>
      </Stack>
      <Spacer />
      <ToolSlot w={88} left color="#e8623a" weight={600}>
        <ChartNoAxesColumn size={13} strokeWidth={2} />指标<VLine h={12} color="#6b3520" />3/3
      </ToolSlot>
      <ToolSlot w={70} left color="#cfcfd1" weight={600}><Flame size={13} strokeWidth={1.8} />热力图<Dot size={5} color="#9a9a9c" /></ToolSlot>
      <ToolSlot w={32}><CodeWindow /></ToolSlot>
      <ToolSlot w={32}><Layers size={15} strokeWidth={1.6} /></ToolSlot>
      <ToolSlot w={32}><NotebookPen size={15} strokeWidth={1.6} /></ToolSlot>
    </Toolbar>
  );
}

const ohlc = [['O:', '1878.13', 16], ['H:', '1881.42', 16], ['L:', '1869.81', 14], ['C:', '1873.33', 15]];
const interest = [['开:', '6.22M'], ['高:', '6.23M'], ['低:', '6.21M'], ['收:', '6.22M']];

function ChartOverlays() {
  return (
    <>
      <ChartTitle>
        <Base>ETH</Base>
        <LegendPart w={36} size={12.5}>USDT</LegendPart>
        <LegendPart w={17} color="#e8e8e8"><SiBinance size={13} /></LegendPart>
        <LegendPart w={63} size={12}>BINANCE.F</LegendPart>
        <VLine h={11} color="#38383b" />
        <LegendPart w={30} pl={10} size={13} color="#b4b4b6">1h</LegendPart>
        <ChevronDown size={12} color="#a4a4a6" />
      </ChartTitle>
      <Legend x={15} y={48} w={368} glow>
        {ohlc.map(([name, value, w]) => (
          <React.Fragment key={name}>
            <LegendPart w={w}>{name}</LegendPart>
            <LegendPart w={49} color="#b9f000" weight={600}>{value}</LegendPart>
          </React.Fragment>
        ))}
        <LegendPart w={44} pl={5} color="#b9f000" weight={600}>-4.80</LegendPart>
        <LegendPart w={54} color="#b9f000" weight={600}>(-0.26%)</LegendPart>
      </Legend>
      <Legend x={15} y={73} w={68} h={20}>
        <LegendPart w={20}>Vol</LegendPart><LegendPart w={40} color="#b9f000" weight={600}>62.8K</LegendPart>
      </Legend>
      <Legend x={15} y={97} w={72}><Tick color="#7fae10" /><LegendPart w={60} size={11}>订单簿热图</LegendPart></Legend>
      <FloatButton x={19} y={120} w={22} h={18} r={4}><ChevronUp size={11} /></FloatButton>
      <FloatButton x={1567} y={8} w={51} h={26} bg="#1b1b1d"><Activity size={12} strokeWidth={1.8} />·<span>M</span></FloatButton>
      <FloatButton x={1622} y={8} w={26} h={26} bg="#0f0f12"><Maximize2 size={13} strokeWidth={1.4} /></FloatButton>
      <FloatButton x={1634} y={219} w={22} h={22} r={4}><Bell size={11} strokeWidth={1.8} /></FloatButton>
      <Legend x={11} y={564} w={216}>
        <Tick color="#b3316d" />
        <LegendPart w={65} size={11.5}>CVD (ETH)</LegendPart>
        <LegendPart w={20} color="#e8e8e8"><SiBinance size={11} /></LegendPart>
        <LegendPart w={44} color="#9c3262">-1.64B</LegendPart>
        <VLine h={14} color="#29292c" />
        <LegendPart w={32} pl={11}><Mark name="pill" /></LegendPart>
        <LegendPart w={50} color="#f0689c" size={11.5} weight={500}>324.96M</LegendPart>
      </Legend>
      <Legend x={11} y={844} w={463}>
        <Tick color="#b9f000" />
        <LegendPart w={107} size={11}>聚合未平仓量 (ETH)</LegendPart>
        <LegendPart w={19}><Mark name="leaf" /></LegendPart>
        <LegendPart w={19}><Mark name="pill" /></LegendPart>
        <LegendPart w={19} color="#e8e8e8"><SiBinance size={10} /></LegendPart>
        <LegendPart w={19}><Mark name="bybit" /></LegendPart>
        <LegendPart w={19}><Mark name="okx" /></LegendPart>
        <LegendPart w={19}><Mark name="bow" /></LegendPart>
        {interest.map(([name, value]) => (
          <React.Fragment key={name}>
            <LegendPart w={18} size={11} color="#dededf" weight={500}>{name}</LegendPart>
            <LegendPart w={38.4} size={11.3} color="#b9f000" weight={600}>{value}</LegendPart>
          </React.Fragment>
        ))}
      </Legend>
      <FloatButton x={14} y={1059} w={42} h={42} r={21} bg="#101012">
        <svg width="18" height="22" viewBox="0 0 18 22" fill="none" stroke="#fff" strokeWidth="1.6">
          <path d="M1.5 16V7H5.5M1.5 1.5V3.5M5 1V3M3.5 17.5L8 20.5V2L16.5 6.5V11.5L12 14.5M8 8H12" />
        </svg>
      </FloatButton>
    </>
  );
}

const App = () => (
  <Page>
    <GlobalStyle />
    <Header>
      <Logo />
      <VLine h={16} gap={10} />
      <NavItem ml={8}>生态系统 <ChevronDown size={12} /></NavItem>
      <NavItem ml={20}>学院</NavItem>
      <NavItem ml={22} strong>API</NavItem>
      <NavItem ml={22} strong>OpenMarket Plus</NavItem>
      <HeaderTools>
        <HeaderTool><FaDiscord size={15} /><Notice /></HeaderTool>
        <HeaderTool><Camera size={16} strokeWidth={1.5} /></HeaderTool>
        <HeaderTool w={37}>
          <svg width="14" height="14" viewBox="0 0 14 14" fill="none" stroke="currentColor" strokeWidth="1.1">
            <path d="M1 13V1H13V11H4L1 13ZM7 8.5L4.8 6.2A1.3 1.3 0 0 1 7 4.6A1.3 1.3 0 0 1 9.2 6.2Z" />
          </svg>
        </HeaderTool>
        <HeaderTool w={32} style={{ gap: 2 }}><Dot size={7} color={lime} /><Dot size={7} color={red} /></HeaderTool>
        <HeaderTool w={32}><Moon size={14} strokeWidth={1.6} /></HeaderTool>
        <Avatar>V</Avatar>
      </HeaderTools>
    </Header>
    <Main>
      <Workspace>
        <TopToolbar />
        <ChartRow>
          <Rail>
            {railGroups.map((group, g) => (
              <React.Fragment key={g}>
                {group.map(([glyph, corner], i) => (
                  <RailButton key={i} active={g === 0 && i === 0} corner={corner}>{glyph}</RailButton>
                ))}
                <RailRule />
              </React.Fragment>
            ))}
            <RailButton><Star {...icon} /></RailButton>
            <RailButton h={28}><ChevronLeft size={14} /></RailButton>
          </Rail>
          <ChartArea><Chart /><ChartOverlays /></ChartArea>
        </ChartRow>
      </Workspace>
      <OrderBook />
    </Main>
    <Footer>
      <FootItem w={53}><Layers size={13} strokeWidth={1.6} />布局</FootItem>
      <FootItem w={19}><Ellipsis size={14} /></FootItem>
      <VLine h={13} />
      <FootItem w={34} pl={11}><ChevronLeft size={12} /></FootItem>
      <ActiveSpace>vink</ActiveSpace>
      <FootItem w={119}>Workspace_810189</FootItem>
      <FootItem w={122}>Workspace_820763</FootItem>
      <FootItem w={124}>Workspace_466898</FootItem>
      <FootItem>Workspace_507896</FootItem>
      <Kata><Sparkle size={10} fill="currentColor" />Kata</Kata>
      <FootItem w={50} ml={15}><Dot color="#22c98a" />聊天</FootItem>
      <VLine h={14} />
      <FootItem w={70} pl={15}>UTC+8</FootItem>
      <FootItem w={65} size={12} weight={600}>11:35:27</FootItem>
      <VLine h={14} />
      <FootItem ml={27}><Dot color="#22c98a" />75ms</FootItem>
      <Signature><SiBinance size={27} />@ Vink柒</Signature>
    </Footer>
  </Page>
);

export default App;
